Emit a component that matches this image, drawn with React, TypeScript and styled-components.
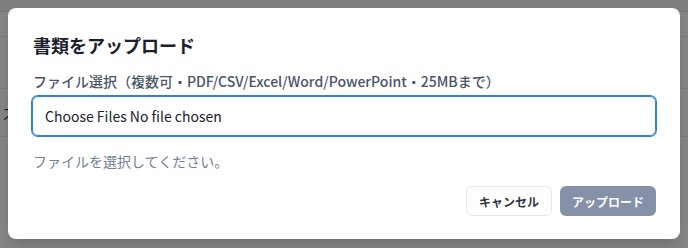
import React from "react";
import styled, { createGlobalStyle } from "styled-components";

const Global = createGlobalStyle`
  html, body { margin: 0; padding: 0; }
  body {
    width: 688px;
    height: 248px;
    overflow: hidden;
    font-family: "Noto Sans CJK JP", "Noto Sans", sans-serif;
    background: #ffffff;
  }
  * { box-sizing: border-box; }
`;

const Page = styled.div`
  position: relative;
  width: 688px;
  height: 248px;
  overflow: hidden;
  background: #ffffff;
`;

const PageBg = styled.div`
  display: flex;
  flex-direction: column;
`;

const TopStrip = styled.div`
  height: 12px;
  background: #f2f2f2;
  border-bottom: 1px solid #e2e2e2;
`;

const PageRow = styled.div<{ $h: number }>`
  height: ${(p) => p.$h}px;
  border-bottom: 1px solid #e2e8f0;
  font-size: 14px;
  color: #2d3748;
  display: flex;
  align-items: center;
  padding-left: 2px;
`;

const Overlay = styled.div`
  position: absolute;
  inset: 0;
  background: rgba(0, 0, 0, 0.48);
  display: flex;
  justify-content: center;
  align-items: flex-start;
  padding-top: 8px;
`;

const Modal = styled.section`
  width: 672px;
  background: #ffffff;
  border-radius: 8px;
  box-shadow: 0 10px 15px -3px rgba(0, 0, 0, 0.12), 0 4px 6px -2px rgba(0, 0, 0, 0.06);
  display: flex;
  flex-direction: column;
`;

const Header = styled.header`
  padding: 24px 24px 0 25px;
  font-size: 18px;
  line-height: 27px;
  font-weight: 700;
  color: #1a202c;
`;

const Body = styled.div`
  padding: 12px 24px 0 24px;
  display: flex;
  flex-direction: column;
`;

const Label = styled.label`
  font-size: 14px;
  line-height: 21px;
  font-weight: 500;
  color: #4a5568;
  margin-left: 1px;
  margin-bottom: 4px;
`;

const FileBox = styled.div`
  height: 40px;
  border: 1px solid #3182ce;
  box-shadow: 0 0 0 1px #3182ce;
  border-radius: 6px;
  display: flex;
  align-items: center;
  padding: 0 12px;
  font-size: 14px;
  color: #1a202c;
`;

const Helper = styled.p`
  margin: 15px 0 0 1px;
  font-size: 14px;
  line-height: 21px;
  color: #718096;
`;

const Footer = styled.footer`
  display: flex;
  justify-content: flex-end;
  gap: 8px;
  padding: 14px 24px 23px 24px;
`;

const Button = styled.button<{ $primary?: boolean }>`
  height: 30px;
  padding: 0 ${(p) => (p.$primary ? 11 : 12)}px;
  border-radius: 6px;
  font-family: inherit;
  font-size: 12px;
  font-weight: 700;
  white-space: nowrap;
  border: 1px solid ${(p) => (p.$primary ? "transparent" : "#e2e8f0")};
  background: ${(p) => (p.$primary ? "#8591a6" : "#ffffff")};
  color: ${(p) => (p.$primary ? "#ffffff" : "#2d3748")};
  display: flex;
  align-items: center;
  justify-content: center;
`;

export default function App() {
  return (
    <>
      <Global />
      <Page>
        <PageBg>
          <TopStrip />
          <PageRow $h={25} />
          <PageRow $h={52} />
          <PageRow $h={48}>ス</PageRow>
        </PageBg>
        <Overlay>
          <Modal>
            <Header>書類をアップロード</Header>
            <Body>
              <Label>ファイル選択（複数可・PDF/CSV/Excel/Word/PowerPoint・25MBまで）</Label>
              <FileBox>Choose Files No file chosen</FileBox>
              <Helper>ファイルを選択してください。</Helper>
            </Body>
            <Footer>
              <Button>キャンセル</Button>
              <Button $primary>アップロード</Button>
            </Footer>
          </Modal>
        </Overlay>
      </Page>
    </>
  );
}
